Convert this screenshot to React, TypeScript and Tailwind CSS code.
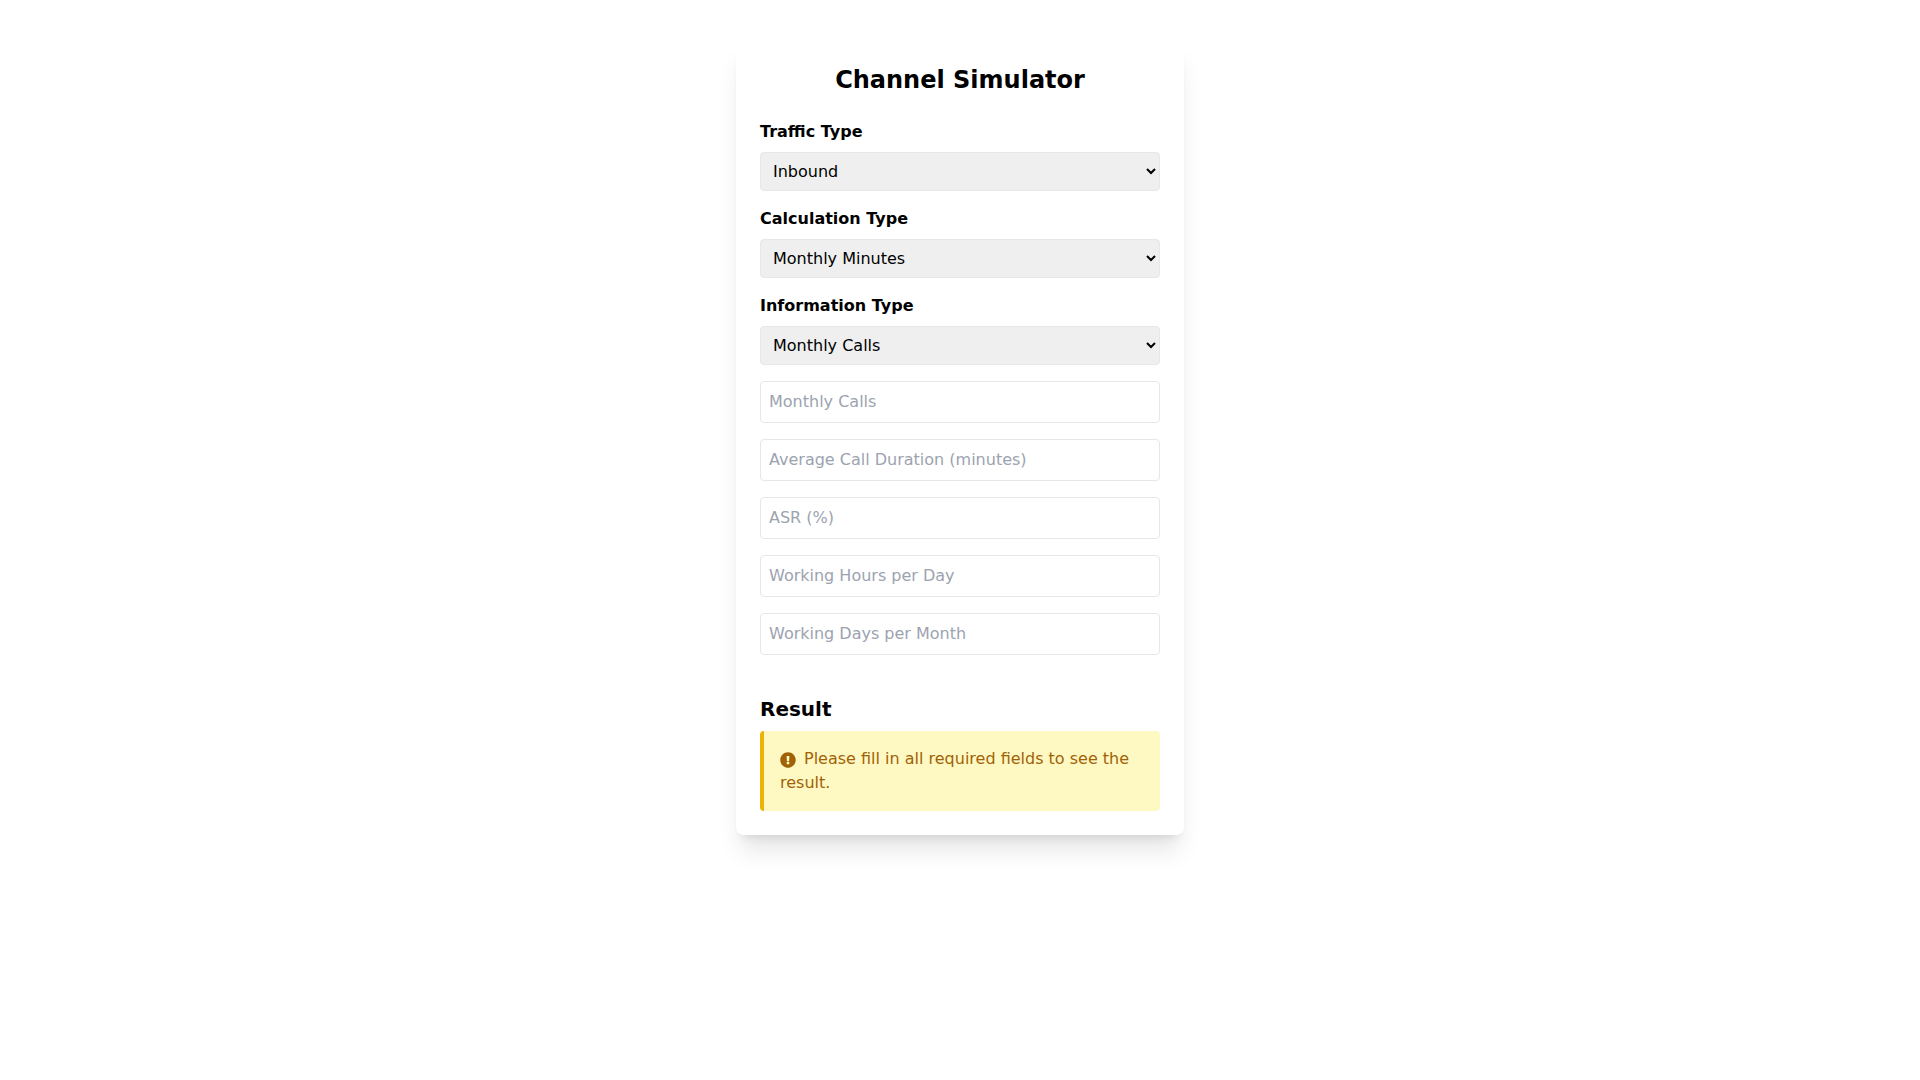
import { useState } from "react";

const font = { fontFamily: '"DejaVu Sans", sans-serif' };

const selects = [
  { label: "Traffic Type", options: ["Inbound", "Outbound"] },
  { label: "Calculation Type", options: ["Monthly Minutes", "Agents"] },
  { label: "Information Type", options: ["Monthly Calls", "Daily Calls"] },
];

const fields = [
  "Monthly Calls",
  "Average Call Duration (minutes)",
  "ASR (%)",
  "Working Hours per Day",
  "Working Days per Month",
];

function AlertIcon() {
  return (
    <svg viewBox="0 0 512 512" className="mr-2 inline-block h-4 w-4 align-[-4px]" fill="currentColor">
      <path d="M504 256c0 136.997-111.043 248-248 248S8 392.997 8 256C8 119.083 119.043 8 256 8s248 111.083 248 248zm-248 50c-25.405 0-46 20.595-46 46s20.595 46 46 46 46-20.595 46-46-20.595-46-46-46zm-43.673-165.346l7.418 136c.347 6.364 5.609 11.346 11.982 11.346h48.546c6.373 0 11.635-4.982 11.982-11.346l7.418-136c.375-6.874-5.098-12.654-11.982-12.654h-63.383c-6.884 0-12.356 5.78-11.981 12.654z" />
    </svg>
  );
}

export default function App() {
  const [values, setValues] = useState<Record<string, string>>({});

  return (
    <div className="min-h-screen bg-white pt-10 text-black" style={font}>
      <div className="mx-auto w-[448px] rounded-lg bg-white p-6 shadow-xl">
        <h1 className="mb-6 text-center text-2xl font-bold">Channel Simulator</h1>
        {selects.map((s) => (
          <div key={s.label} className="mb-4">
            <label className="mb-2 block font-bold">{s.label}</label>
            <select className="h-[39px] w-full rounded border border-[#e5e7eb] bg-[#efefef] p-2 text-base">
              {s.options.map((o) => (
                <option key={o}>{o}</option>
              ))}
            </select>
          </div>
        ))}
        {fields.map((f) => (
          <input
            key={f}
            type="text"
            placeholder={f}
            value={values[f] ?? ""}
            onChange={(e) => setValues({ ...values, [f]: e.target.value })}
            className="mb-4 block w-full rounded border border-[#e5e7eb] p-2 text-base placeholder:text-[#9ca3af]"
          />
        ))}
        <h2 className="mt-10 mb-2 text-xl font-bold">Result</h2>
        <div className="rounded border-l-4 border-[#eab308] bg-[#fef9c3] p-4 text-[#a16207]">
          <AlertIcon />
          Please fill in all required fields to see the result.
        </div>
      </div>
    </div>
  );
}
